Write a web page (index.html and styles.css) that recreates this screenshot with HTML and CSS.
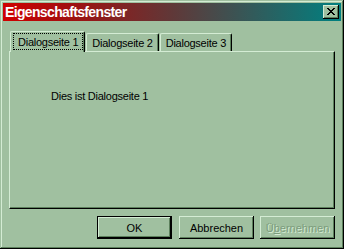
FILE: index.html
```html
<!DOCTYPE html>
<html lang="de">
<head>
<meta charset="utf-8">
<title>Eigenschaftsfenster</title>
<link rel="stylesheet" href="styles.css">
</head>
<body>
<div class="window">
  <div class="titlebar">
    <span class="title">Eigenschaftsfenster</span>
    <button class="close" aria-label="Schließen">
      <svg width="8" height="7" viewBox="0 0 8 7" shape-rendering="crispEdges">
        <path d="M0 0h2v1h-2zM6 0h2v1h-2zM1 1h2v1h-2zM5 1h2v1h-2zM2 2h4v1h-4zM3 3h2v1h-2zM2 4h4v1h-4zM1 5h2v1h-2zM5 5h2v1h-2zM0 6h2v1h-2zM6 6h2v1h-2z" fill="#000"/>
      </svg>
    </button>
  </div>
  <div class="content">
    <div class="tabs">
      <div class="tab selected"><span class="focus">Dialogseite 1</span></div>
      <div class="tab">Dialogseite 2</div>
      <div class="tab">Dialogseite 3</div>
    </div>
    <div class="panel">
      <p class="message">Dies ist Dialogseite 1</p>
    </div>
    <div class="buttons">
      <button class="btn default">OK</button>
      <button class="btn">Abbrechen</button>
      <button class="btn disabled" disabled>Ü<u>b</u>ernehmen</button>
    </div>
  </div>
</div>
</body>
</html>
```

FILE: styles.css
```css
:root {
  --face: #a0c0a0;
  --light: #d4ecd4;
  --dark: #5c805c;
}

html, body {
  margin: 0;
  padding: 0;
  background: var(--face);
}

.window {
  width: 344px;
  height: 249px;
  box-sizing: border-box;
  padding: 3px;
  background: var(--face);
  box-shadow: inset -1px -1px 0 #000, inset 1px 1px 0 var(--face),
              inset -2px -2px 0 var(--dark), inset 2px 2px 0 var(--light);
  display: flex;
  flex-direction: column;
  font-family: "Liberation Sans", Arial, sans-serif;
  font-size: 11px;
  color: #000;
}

.titlebar {
  height: 18px;
  display: flex;
  align-items: center;
  justify-content: space-between;
  padding: 0 2px 0 2px;
  background: linear-gradient(to right, #d00000 0%, #a01010 20%, #603838 50%, #008080 100%);
}

.title {
  color: #fff;
  font-weight: bold;
  font-size: 14px;
  line-height: 18px;
  letter-spacing: -0.65px;
}

.close {
  width: 16px;
  height: 14px;
  padding: 0;
  margin: 0;
  border: 0;
  background: var(--face);
  box-shadow: inset -1px -1px 0 #000, inset 1px 1px 0 var(--light),
              inset -2px -2px 0 var(--dark);
  display: flex;
  align-items: center;
  justify-content: center;
}

.close svg {
  display: block;
  margin-left: -1px;
  margin-top: -1px;
}

.content {
  flex: 1;
  display: flex;
  flex-direction: column;
  padding: 10px 6px 0 6px;
}

.tabs {
  display: flex;
  align-items: flex-end;
  gap: 1px;
  height: 20px;
  padding-left: 1px;
  position: relative;
  z-index: 1;
  letter-spacing: -0.25px;
}

.tab {
  height: 18px;
  box-sizing: border-box;
  padding: 2px 5px 0 5px;
  border-top: 1px solid var(--light);
  border-left: 1px solid var(--light);
  border-right: 1px solid #000;
  border-radius: 2px 2px 0 0;
  box-shadow: inset -1px 0 0 var(--dark);
  line-height: 14px;
  white-space: nowrap;
}

.tab.selected {
  height: 21px;
  margin-bottom: -1px;
  background: var(--face);
  padding: 1px 1px 0 2px;
}

.focus {
  display: block;
  border: 1px dotted #000;
  padding: 1px 4px 0 4px;
  height: 17px;
  line-height: 14px;
  box-sizing: border-box;
}

.panel {
  height: 158px;
  box-sizing: border-box;
  border-top: 1px solid var(--light);
  border-left: 1px solid var(--light);
  border-right: 1px solid #000;
  border-bottom: 1px solid #000;
  box-shadow: inset -1px -1px 0 var(--dark);
}

.message {
  margin: 38px 0 0 41px;
  letter-spacing: -0.25px;
}

.buttons {
  display: flex;
  justify-content: flex-end;
  gap: 6px;
  margin-top: 7px;
}

.btn {
  width: 75px;
  height: 23px;
  padding: 0;
  margin: 0;
  border: 0;
  background: var(--face);
  font-family: "Liberation Sans", Arial, sans-serif;
  font-size: 11px;
  color: #000;
  box-shadow: inset -1px -1px 0 #000, inset 1px 1px 0 var(--light),
              inset -2px -2px 0 var(--dark);
}

.btn.default {
  margin-right: 1px;
  box-shadow: inset 0 0 0 1px #000, inset -2px -2px 0 #000,
              inset 2px 2px 0 var(--light), inset -3px -3px 0 var(--dark);
}

.btn.disabled {
  color: #7c9c7c;
  text-shadow: 1px 1px 0 var(--light);
}
```
